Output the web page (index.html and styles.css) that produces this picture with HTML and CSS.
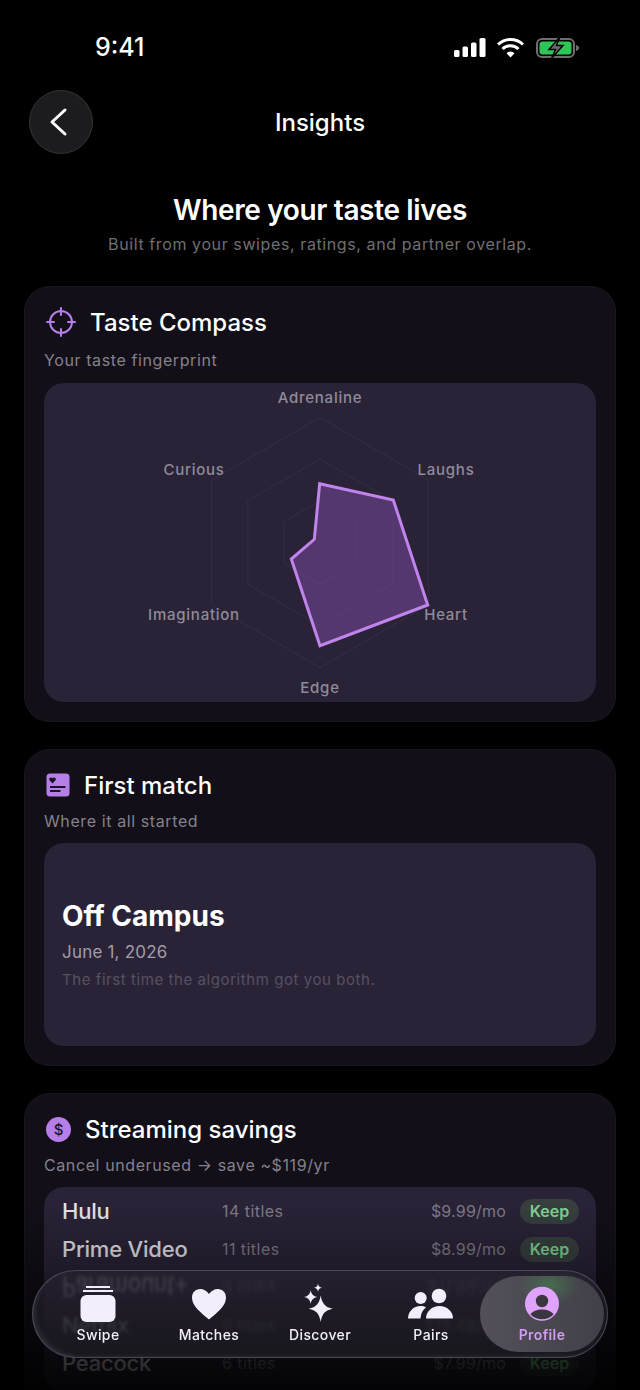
FILE: index.html
```html
<!DOCTYPE html>
<html lang="en">
  <head>
    <meta charset="UTF-8" />
    <meta name="viewport" content="width=device-width, initial-scale=1.0" />
    <title>Insights</title>
    <link rel="stylesheet" href="styles.css">
  </head>
  <body>
    <div class="screen">
      <!-- status bar -->
      <div class="status">
        <span class="time">9:41</span>
        <svg class="status-icons" width="128" height="22" viewBox="0 0 128 22">
          <rect x="1" y="13" width="5.500" height="7" rx="1.500" fill="#fff"/>
          <rect x="9.500" y="9.500" width="5.500" height="10.500" rx="1.500" fill="#fff"/>
          <rect x="18" y="5.500" width="5.500" height="14.500" rx="1.500" fill="#fff"/>
          <rect x="26.500" y="1" width="6" height="19" rx="1.500" fill="#fff"/>
          <path d="M45 7.500a18 18 0 0 1 25 0" fill="none" stroke="#fff" stroke-width="3"/>
          <path d="M49.500 12a11.500 11.500 0 0 1 16 0" fill="none" stroke="#fff" stroke-width="3"/>
          <path d="M53.500 16.200a5.700 5.700 0 0 1 8 0L57.500 20.500z" fill="#fff"/>
          <rect x="84" y="2" width="37" height="18" rx="5" fill="none" stroke="#6e6e6e" stroke-width="2"/>
          <rect x="86.500" y="4.500" width="32" height="13" rx="3" fill="#30c558"/>
          <path d="M123 8v6c1.800-.4 3-1.600 3-3s-1.200-2.600-3-3z" fill="#6e6e6e"/>
          <path d="M107 0L96 12.500h6.500L98.500 21.500 110 8.500h-6.500z" fill="#6a6a6a" stroke="#000" stroke-width="1.500"/>
        </svg>
      </div>

      <!-- nav -->
      <div class="nav">
        <button class="back">
          <svg width="20" height="30" viewBox="0 0 20 30"><path d="M16 3L3 15l13 12" fill="none" stroke="#fff" stroke-width="3" stroke-linecap="round" stroke-linejoin="round"/></svg>
        </button>
        <p class="nav-title">Insights</p>
      </div>

      <div class="hero">
        <h1>Where your taste lives</h1>
        <p>Built from your swipes, ratings, and partner overlap.</p>
      </div>

      <!-- taste compass -->
      <section class="card compass">
        <div class="card-head">
          <svg class="crosshair" width="30" height="30" viewBox="0 0 30 30">
            <circle cx="15" cy="15" r="11" fill="none" stroke="#b57ee8" stroke-width="2"/>
            <path d="M15 1v7M15 22v7M1 15h7M22 15h7" stroke="#b57ee8" stroke-width="2" stroke-linecap="round"/>
          </svg>
          <h2>Taste Compass</h2>
        </div>
        <p class="card-sub">Your taste fingerprint</p>
        <div class="panel radar">
          <svg class="radar-chart" width="552" height="319" viewBox="0 0 552 319">
            <g fill="none" stroke="#342e44" stroke-width="1">
              <polygon points="276,34.500 384.300,97 384.300,222 276,284.500 167.700,222 167.700,97"/>
              <polygon points="276,76.200 348.200,117.800 348.200,201.200 276,242.800 203.800,201.200 203.800,117.800"/>
              <polygon points="276,117.800 312.100,138.700 312.100,180.300 276,201.200 239.900,180.300 239.900,138.700"/>
            </g>
            <polygon points="275.700,100.700 349.300,117 383.700,222 276,262.700 247.300,176 270.300,156.300" fill="#804ba6" fill-opacity="0.5" stroke="#c084ec" stroke-width="3" stroke-linejoin="miter"/>
          </svg>
          <span class="axis axis-top">Adrenaline</span>
          <span class="axis axis-tr">Laughs</span>
          <span class="axis axis-br">Heart</span>
          <span class="axis axis-bottom">Edge</span>
          <span class="axis axis-bl">Imagination</span>
          <span class="axis axis-tl">Curious</span>
        </div>
      </section>

      <!-- first match -->
      <section class="card">
        <div class="card-head">
          <svg class="ticket" width="24" height="24" viewBox="0 0 24 24">
            <rect x="0.500" y="0.500" width="23" height="23" rx="3.500" fill="#b57ee8"/>
            <path d="M6.500 10.500L3.500 7.300c-1.500-2 1.600-4.200 3-2 1.400-2.200 4.500 0 3 2z" fill="#1d1526"/>
            <path d="M4 14h15.500M4 18h10.500" stroke="#1d1526" stroke-width="1.800"/>
          </svg>
          <h2>First match</h2>
        </div>
        <p class="card-sub">Where it all started</p>
        <div class="panel first">
          <h3>Off Campus</h3>
          <p class="first-date">June 1, 2026</p>
          <p class="first-note">The first time the algorithm got you both.</p>
        </div>
      </section>

      <!-- savings -->
      <section class="card">
        <div class="card-head">
          <span class="dollar">$</span>
          <h2>Streaming savings</h2>
        </div>
        <p class="card-sub">Cancel underused → save ~$119/yr</p>
        <div class="panel rows">
          <div class="row"><span class="row-name">Hulu</span><span class="row-count">14 titles</span><span class="row-price">$9.99/mo</span><span class="keep">Keep</span></div>
          <div class="row"><span class="row-name">Prime Video</span><span class="row-count">11 titles</span><span class="row-price">$8.99/mo</span><span class="keep">Keep</span></div>
          <div class="row row-warped"><span class="row-name">Paramount+</span><span class="row-count">9 titles</span><span class="row-price">$11.99/mo</span><span class="keep">Keep</span></div>
          <div class="row"><span class="row-name">Netflix</span><span class="row-count">9 titles</span><span class="row-price">$15.49/mo</span><span class="keep">Keep</span></div>
          <div class="row"><span class="row-name">Peacock</span><span class="row-count">6 titles</span><span class="row-price">$7.99/mo</span><span class="keep">Keep</span></div>
        </div>
      </section>

      <div class="fade"></div>

      <!-- tab bar -->
      <nav class="tabs">
        <a class="tab">
          <svg width="40" height="42" viewBox="0 0 40 42">
            <path d="M8 6h24M5 10h30" fill="none" stroke="#f3eefb" stroke-width="1.800"/>
            <rect x="2.500" y="14" width="35" height="27" rx="6" fill="#f3eefb"/>
          </svg>
          <span>Swipe</span>
        </a>
        <a class="tab">
          <svg width="40" height="42" viewBox="0 0 40 42">
            <path d="M20 38.500C12 31.500 3 25.500 3 16.500c0-5 3.700-8.500 8.200-8.500 3.500 0 6.800 2 8.800 5 2-3 5.300-5 8.800-5 4.500 0 8.200 3.500 8.200 8.500 0 9-9 15-17 22z" fill="#f3eefb"/>
          </svg>
          <span>Matches</span>
        </a>
        <a class="tab">
          <svg width="40" height="42" viewBox="0 0 40 42">
            <path d="M20.700 14.500c1.300 8 4.500 11.700 12 13.200-7.500 1.500-10.700 5-12 13.300-1.300-8.300-4.500-11.800-12-13.300 7.500-1.500 10.700-5.200 12-13.200z" fill="#f3eefb"/>
            <path d="M10.700 9c.6 4 2.500 6.200 7 7-4.500.8-6.400 3-7 7-.6-4-2.500-6.200-7-7 4.500-.8 6.400-3 7-7z" fill="#f3eefb"/>
            <path d="M18 2.700c.4 2.400 1.400 3.500 4 4-2.600.5-3.600 1.600-4 4-.4-2.400-1.400-3.500-4-4 2.600-.5 3.600-1.600 4-4z" fill="#f3eefb"/>
          </svg>
          <span>Discover</span>
        </a>
        <a class="tab">
          <svg width="48" height="42" viewBox="0 0 48 42">
            <circle cx="13.700" cy="17" r="6" fill="#f3eefb"/>
            <circle cx="32" cy="15" r="7.300" fill="#f3eefb"/>
            <path d="M1 37.500c0-7 5.500-12.500 12.500-12.500 2.300 0 4 .5 5.500 1.300-3.300 2.700-5.200 6.500-5.500 11.200z" fill="#f3eefb"/>
            <path d="M19 37.500c0-7 6-12.500 13.500-12.500S46 30.500 46 37.500z" fill="#f3eefb"/>
          </svg>
          <span>Pairs</span>
        </a>
        <a class="tab active">
          <svg width="40" height="42" viewBox="0 0 40 42">
            <circle cx="20" cy="22.700" r="17" fill="#dfa3fb"/>
            <circle cx="20" cy="20" r="6.200" fill="#3b3540"/>
            <path d="M8.500 33.500c2-3.200 6.500-5 11.500-5s9.500 1.800 11.500 5c-3 3-7 4.700-11.500 4.700s-8.500-1.700-11.500-4.700z" fill="#3b3540"/>
          </svg>
          <span>Profile</span>
        </a>
      </nav>
    </div>
  </body>
</html>
```

FILE: styles.css
```css
* {
  margin: 0;
  padding: 0;
  box-sizing: border-box;
  font-family: "Inter", "Liberation Sans", sans-serif;
}

body {
  background-color: #000;
}

.screen {
  position: relative;
  width: 640px;
  height: 1390px;
  overflow: hidden;
  background-color: #000;
  color: #fff;
}

/* status bar */
.status {
  height: 90px;
  padding: 27px 59px 23px 95px;
  display: flex;
  justify-content: space-between;
  align-items: center;
}
.time {
  font-size: 25px;
  font-weight: 500;
}
.status-icons {
  display: block;
  margin-top: 1px;
}

/* nav */
.nav {
  height: 64px;
  padding: 0 29px;
  display: grid;
  grid-template-columns: 64px 1fr 64px;
  align-items: center;
}
.back {
  width: 64px;
  height: 64px;
  border-radius: 50%;
  background-color: #1c1c1e;
  border: 1px solid #333335;
  display: flex;
  justify-content: center;
  align-items: center;
}
.back svg {
  margin-right: 4px;
}
.nav-title {
  text-align: center;
  font-size: 24px;
  font-weight: 500;
}

/* hero */
.hero {
  margin-top: 39px;
  margin-bottom: 30px;
  text-align: center;
}
.hero h1 {
  font-size: 28px;
  line-height: 34px;
  font-weight: 600;
  letter-spacing: -0.36px;
}
.hero p {
  margin-top: 5px;
  font-size: 16px;
  line-height: 24px;
  color: #6f6f73;
  letter-spacing: 0.6px;
}

/* cards */
.card {
  margin: 0 24px 27px;
  padding: 20px;
  border-radius: 26px;
  background-color: #120f18;
  box-shadow: inset 0 0 0 1px #18151f;
}
.card-head {
  height: 32px;
  display: flex;
  align-items: center;
  gap: 14px;
}
.card-head h2 {
  font-size: 24px;
  font-weight: 500;
}
.card-sub {
  margin-top: 8px;
  font-size: 16px;
  line-height: 24px;
  color: #85818c;
  letter-spacing: 0.6px;
}
.panel {
  margin-top: 10px;
  border-radius: 20px;
  background-color: #2a2338;
}
.ticket,
.crosshair {
  margin-left: 2px;
}

/* compass */
.compass .card-sub {
  margin-top: 10px;
}
.compass .panel {
  margin-top: 11px;
}
.radar {
  position: relative;
  height: 319px;
}
.radar-chart {
  display: block;
}
.axis {
  position: absolute;
  transform: translate(-50%, -50%);
  font-size: 15px;
  font-weight: 500;
  color: #8f8b98;
  letter-spacing: 0.75px;
}
.axis-top { left: 276px; top: 14px; }
.axis-tr { left: 402px; top: 85.5px; }
.axis-br { left: 402px; top: 230.5px; }
.axis-bottom { left: 276px; top: 304px; }
.axis-bl { left: 150px; top: 230.5px; }
.axis-tl { left: 150px; top: 85.5px; }

/* first match */
.first {
  height: 203px;
  padding: 56px 18px 0;
}
.first h3 {
  font-size: 28px;
  line-height: 34px;
  font-weight: 700;
}
.first-date {
  margin-top: 7px;
  font-size: 17px;
  line-height: 24px;
  color: #a09ca8;
  letter-spacing: 0.2px;
}
.first-note {
  margin-top: 4px;
  font-size: 15px;
  line-height: 24px;
  color: #565160;
  letter-spacing: 0.57px;
}

/* savings */
.dollar {
  width: 25px;
  height: 25px;
  margin-left: 2px;
  border-radius: 50%;
  background-color: #b57ee8;
  color: #1d1526;
  font-size: 15px;
  font-weight: 500;
  display: flex;
  justify-content: center;
  align-items: center;
}
.rows {
  padding: 5px 17px 10px 18px;
}
.row {
  height: 38px;
  display: grid;
  grid-template-columns: 146px 1fr auto 59px;
  column-gap: 14px;
  align-items: center;
}
.row-name {
  font-size: 22px;
  font-weight: 500;
  color: #e8e6ec;
  letter-spacing: -0.2px;
  white-space: nowrap;
}
.row-count,
.row-price {
  font-size: 16px;
  color: #807c88;
  letter-spacing: 0.2px;
}
.row-count {
  letter-spacing: 0.45px;
}
.keep {
  height: 25px;
  border-radius: 13px;
  background-color: #37403f;
  color: #82d596;
  font-size: 16px;
  font-weight: 600;
  display: flex;
  justify-content: center;
  align-items: center;
}
.row-warped > span {
  transform: scale(1, -1.2);
  filter: blur(0.7px);
  opacity: 0.6;
}

/* fades the content under the tab bar */
.fade {
  position: absolute;
  left: 0;
  right: 0;
  bottom: 0;
  height: 190px;
  background: linear-gradient(to bottom, rgba(0, 0, 0, 0), rgba(0, 0, 0, 0.28) 37%, rgba(0, 0, 0, 0.78) 84%, rgba(0, 0, 0, 0.9) 100%);
}

/* tab bar */
.tabs {
  position: absolute;
  left: 32px;
  top: 1270px;
  width: 576px;
  height: 88px;
  padding: 0 10.5px;
  border-radius: 44px;
  background: linear-gradient(to bottom, rgba(42, 38, 52, 0.6), rgba(30, 28, 36, 0.75));
  backdrop-filter: blur(1.5px);
  box-shadow: inset 0 0 0 1px #4a4656, inset 5px -3px 5px -2px rgba(255, 255, 255, 0.1);
  display: grid;
  grid-template-columns: repeat(5, 111px);
}
.tab {
  display: flex;
  flex-direction: column;
  align-items: center;
  padding-top: 11px;
  color: #f3eefb;
  font-size: 14px;
  font-weight: 500;
  letter-spacing: 0.4px;
}
.tab span {
  line-height: 20px;
}
.tab svg {
  display: block;
  margin-bottom: 2px;
}
.tab.active {
  position: relative;
  color: #d29bf5;
  font-weight: 600;
}
.tab.active::before {
  content: "";
  position: absolute;
  left: -6.5px;
  right: -6.5px;
  top: 6px;
  bottom: 6px;
  border-radius: 38px;
  background:
    radial-gradient(ellipse 30px 20px at 56% 12%, rgba(70, 140, 80, 0.55), rgba(70, 140, 80, 0) 100%),
    linear-gradient(to right, rgba(86, 83, 92, 0.95), rgba(68, 66, 74, 0.95));
}
.tab.active svg,
.tab.active span {
  position: relative;
}
```
